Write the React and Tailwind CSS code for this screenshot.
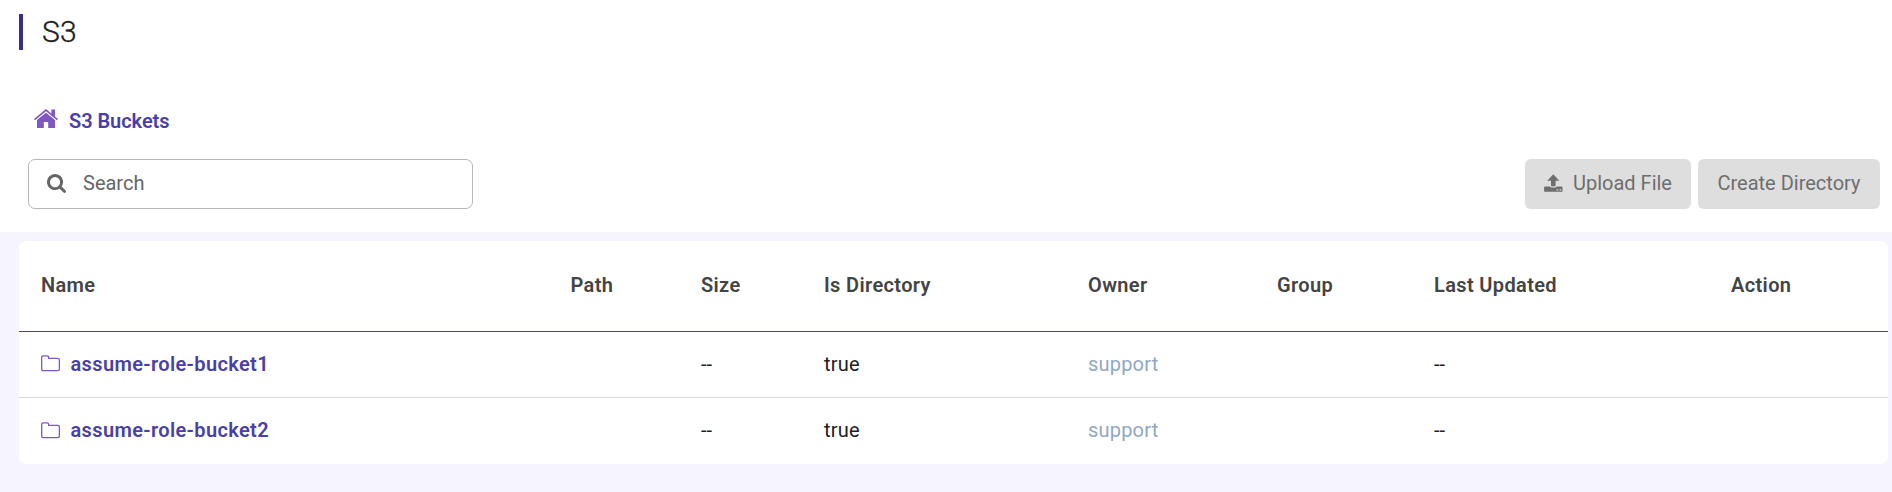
const columns = ["Name", "Path", "Size", "Is Directory", "Owner", "Group", "Last Updated", "Action"];
const buckets = [{ name: "assume-role-bucket1" }, { name: "assume-role-bucket2" }];

function HomeIcon() {
  return (
    <svg width="24" height="20" viewBox="0 0 24 20" fill="#7e57c2" className="mr-[11px] -mt-1 shrink-0">
      <path d="M12 0 17.4 4.4V.5H21V7.4L24 9.9 23 11.2 12 2.2 1 11.2 0 9.9Z" />
      <path d="M12 3.7 21 11V18.4Q21 19 20.4 19H14.2V13H9.8V19H3.6Q3 19 3 18.4V11Z" />
    </svg>
  );
}

function SearchIcon() {
  return (
    <svg width="19" height="19" viewBox="64 128 1664 1664" fill="currentColor" className="mr-[17.5px] -mt-px shrink-0">
      <path d="M1216 832q0-185-131.500-316.500t-316.500-131.500-316.500 131.500-131.500 316.500 131.500 316.500 316.500 131.500 316.500-131.500 131.500-316.500zm512 832q0 52-38 90t-90 38q-54 0-90-38l-343-342q-179 124-399 124-143 0-273.500-55.500t-225-150-150-225-55.500-273.500 55.500-273.500 150-225 225-150 273.500-55.500 273.500 55.500 225 150 150 225 55.500 273.500q0 220-124 399l343 343q37 37 37 90z" />
    </svg>
  );
}

function UploadIcon() {
  return (
    <svg width="19" height="18" viewBox="0 0 19 18" fill="currentColor" className="mr-[10px] shrink-0">
      <path d="M9.300 .3 15.300 6.800H11.600V11.500Q11.600 12.200 10.900 12.200H7.700Q7 12.200 7 11.500V6.800H3.300Z" />
      <path fillRule="evenodd" d="M1 12.500H5.900Q6.400 13.500 7.700 13.500H10.900Q12.200 13.500 12.700 12.500H17.600Q18.500 12.500 18.500 13.400V16.900Q18.500 17.800 17.600 17.800H1Q.1 17.800 .1 16.900V13.400Q.1 12.500 1 12.500ZM12.600 15.200V16.600H14.200V15.200ZM15.600 15.200V16.600H17.200V15.200Z" />
    </svg>
  );
}

function FolderIcon() {
  return (
    <svg width="20" height="17" viewBox="0 0 20 17" fill="none" stroke="#7e57c2" strokeWidth="1.3" className="mr-[9.500px] shrink-0">
      <path d="M.7 13.900V2.600Q.7.9 2.400.9H6Q7.700.9 7.700 2.600V3.400H16.600Q18.400 3.400 18.400 5.100V13.900Q18.400 15.600 16.700 15.600H2.400Q.7 15.600.7 13.900Z" />
    </svg>
  );
}

export default function App() {
  return (
    <div className="h-[492px] w-[1892px] overflow-hidden bg-white font-['Roboto',sans-serif] text-[20px] leading-6 text-[#212121]">
      <header className="flex pl-[19px] pt-[14px]">
        <div className="h-9 w-1 bg-[#3f2a8c]" />
        <h1 className="pl-[19px] text-[30px] font-light leading-9 tracking-[0.3px] [-webkit-text-stroke:0.35px_#212121]">S3</h1>
      </header>

      <nav className="mt-[59px] flex h-6 items-center pl-[34px] font-semibold text-[#4a3fa8]">
        <HomeIcon />
        <a className="tracking-[-0.05px]">S3 Buckets</a>
      </nav>

      <div className="mt-[26px] flex h-[50px] justify-between pl-7 pr-3">
        <div className="flex w-[445px] items-center rounded-[7px] border border-[#b8b8b8] pl-[17.5px] text-[#666]">
          <SearchIcon />
          <span className="-mt-0.5">Search</span>
        </div>
        <div className="flex gap-[7px] text-[#6e6e6e]">
          <button className="flex w-[166px] items-center rounded-[6px] bg-[#dedede] pb-[2px] pl-[19px]">
            <UploadIcon />
            Upload File
          </button>
          <button className="w-[182px] rounded-[6px] bg-[#dedede] pb-[2px]">Create Directory</button>
        </div>
      </div>

      <main className="mt-[23px] h-[260px] bg-[#f5f4ff] pl-[19px] pr-1 pt-[9px]">
        <div className="h-[223px] overflow-hidden rounded-[7px] bg-white">
          <table className="w-full table-fixed border-separate border-spacing-0 text-left">
            <colgroup>
              <col className="w-[529.5px]" />
              <col className="w-[130.5px]" />
              <col className="w-[123px]" />
              <col className="w-[264px]" />
              <col className="w-[189px]" />
              <col className="w-[157px]" />
              <col className="w-[297px]" />
              <col />
            </colgroup>
            <thead>
              <tr>
                {columns.map((c) => (
                  <th key={c} className="h-[91px] border-b border-[#4a3fa8] p-0 pb-[2px] pl-[22px] font-semibold tracking-[0.36px] text-[#444]">{c}</th>
                ))}
              </tr>
            </thead>
            <tbody>
              {buckets.map((b) => (
                <tr key={b.name} className="[&>td]:h-[66px] [&>td]:border-b [&>td]:border-[#dadada] [&>td]:p-0 [&>td]:pb-[2px] [&>td]:pl-[22px] last:[&>td]:border-b-0">
                  <td>
                    <a className="flex items-center font-semibold tracking-[0.36px] text-[#4a3fa8]">
                      <FolderIcon />
                      {b.name}
                    </a>
                  </td>
                  <td />
                  <td>--</td>
                  <td className="tracking-[0.25px]">true</td>
                  <td className="tracking-[0.2px] text-[#90a8c0]">support</td>
                  <td />
                  <td>--</td>
                  <td />
                </tr>
              ))}
            </tbody>
          </table>
        </div>
      </main>
    </div>
  );
}
